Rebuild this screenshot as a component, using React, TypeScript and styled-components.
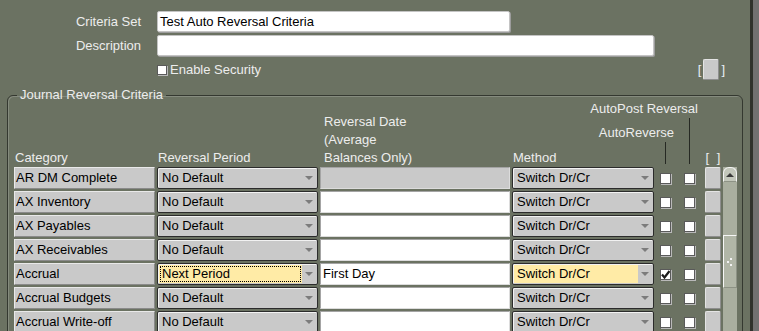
import React from 'react';
import styled, { createGlobalStyle } from 'styled-components';

const GlobalStyle = createGlobalStyle`
  html, body { margin: 0; padding: 0; }
  body {
    background: #6b7262;
    font-family: "Liberation Sans", Arial, sans-serif;
    font-size: 13px;
    color: #000;
  }
`;

const Page = styled.div`
  display: flex;
  height: 331px;
  overflow: hidden;
`;

const Main = styled.div`
  flex: 1;
  display: flex;
  flex-direction: column;
  min-width: 0;
`;

const WindowEdge = styled.div`
  width: 9px;
  border-left: 3px solid #2f322c;
  background: #717171;
  box-sizing: border-box;
`;

const TopForm = styled.div`
  display: grid;
  grid-template-columns: 141px 568px;
  column-gap: 16px;
  row-gap: 3px;
  padding-top: 11px;
  align-items: center;
`;

const Label = styled.div`
  text-align: right;
  color: #ededed;
  white-space: nowrap;
`;

const TextInput = styled.div<{ $width: number }>`
  width: ${p => p.$width}px;
  height: 21px;
  box-sizing: border-box;
  background: #fff;
  border: 1px solid #c4c4c4;
  border-radius: 2px;
  box-shadow: 1px 1px 0 #9c9c9c;
  padding: 0 2px;
  line-height: 19px;
  white-space: nowrap;
`;

const SecurityRow = styled.div`
  grid-column: 2;
  display: flex;
  justify-content: space-between;
  align-items: center;
  height: 21px;
`;

const CheckLabel = styled.label`
  display: flex;
  align-items: center;
  gap: 3px;
  color: #ededed;
`;

const Box = styled.span<{ $size?: number }>`
  display: inline-flex;
  align-items: center;
  justify-content: center;
  width: ${p => p.$size ?? 11}px;
  height: ${p => p.$size ?? 11}px;
  box-sizing: border-box;
  background: #fff;
  border: 1px solid #5a5a5a;
  box-shadow: 1px 1px 0 #b9b9b9;
`;

const Brackets = styled.div`
  display: flex;
  align-items: center;
  gap: 2px;
  color: #e6eef6;
`;

const RecordButton = styled.div<{ $h?: number }>`
  width: 16px;
  height: ${p => p.$h ?? 22}px;
  box-sizing: border-box;
  background: #c9c9c9;
  border: 1px solid;
  border-color: #e4e4e4 #8e8e8e #8e8e8e #e4e4e4;
  border-radius: 2px;
`;

const Group = styled.fieldset`
  margin: 8px 7px 0 7px;
  padding: 0 4px 0 6px;
  border: 1px solid #343830;
  border-radius: 6px;
  box-shadow: inset 1px 1px 0 rgba(255, 255, 255, 0.18);
  flex: 1;
  min-width: 0;
`;

const Legend = styled.legend`
  color: #ededed;
  padding: 0 3px;
  margin-left: 3px;
  line-height: 14px;
`;

const cols = '141px 161px 190px 142px 20px 25px 16px';

const HeaderGrid = styled.div`
  display: grid;
  grid-template-columns: ${cols};
  column-gap: 2px;
  height: 65px;
`;

const Head = styled.div<{ $center?: boolean }>`
  color: #ededed;
  line-height: 18px;
  align-self: end;
  white-space: nowrap;
  padding-left: ${p => (p.$center ? 0 : 1)}px;
  text-align: ${p => (p.$center ? 'center' : 'left')};
  word-spacing: ${p => (p.$center ? '4px' : 'normal')};
`;

const HeadWrap = styled(Head)`
  white-space: normal;
  padding-left: 4px;
`;

const LeaderHead = styled.div<{ $lineX: number; $lineH: number; $shift: number }>`
  align-self: end;
  display: flex;
  flex-direction: column;
  align-items: flex-end;
  color: #ededed;
  white-space: nowrap;
  padding-bottom: 3px;

  & > span {
    line-height: 14px;
    margin-right: ${p => p.$shift}px;
  }
  & > i {
    align-self: flex-start;
    margin-left: ${p => p.$lineX}px;
    margin-top: 2px;
    width: 1px;
    height: ${p => p.$lineH}px;
    background: #262923;
  }
`;

const Body = styled.div`
  display: flex;
  gap: 2px;
  align-items: flex-start;
`;

const Rows = styled.div`
  display: grid;
  grid-template-columns: ${cols};
  column-gap: 2px;
  row-gap: 2px;
`;

const CatCell = styled.div`
  height: 22px;
  box-sizing: border-box;
  background: #c9c9c9;
  border: 1px solid;
  border-color: #e9e9e9 #8a8a8a #8a8a8a #e9e9e9;
  padding-left: 1px;
  line-height: 20px;
  white-space: nowrap;
  overflow: hidden;
`;

const Select = styled.div`
  height: 22px;
  box-sizing: border-box;
  display: flex;
  background: #c9c9c9;
  border: 1px solid #2b2b2b;
  border-radius: 2px;
  box-shadow: inset 1px 1px 0 #f2f2f2;
`;

const SelectValue = styled.div<{ $active?: boolean; $focus?: boolean }>`
  flex: 1;
  padding-left: 3px;
  white-space: nowrap;
  background: ${p => (p.$active ? '#ffeba6' : 'transparent')};
  outline: ${p => (p.$focus ? '1px dotted #000' : 'none')};
  outline-offset: -2px;
  margin: 1px 0 1px 1px;
  line-height: 18px;
`;

const Arrow = styled.div`
  width: 15px;
  display: flex;
  align-items: center;
  justify-content: center;
  &::after {
    content: '';
    border-left: 4px solid transparent;
    border-right: 4px solid transparent;
    border-top: 4px solid #7c7c7c;
    margin-right: 1px;
  }
`;

const DateCell = styled.div<{ $disabled?: boolean }>`
  height: 22px;
  box-sizing: border-box;
  background: ${p => (p.$disabled ? '#c9c9c9' : '#fff')};
  border: 1px solid;
  border-color: #a4a4a4 #dcdcdc #dcdcdc #a4a4a4;
  padding-left: 2px;
  line-height: 20px;
  white-space: nowrap;
`;

const CheckCell = styled.div<{ $offset: number }>`
  display: flex;
  align-items: center;
  padding-left: ${p => p.$offset}px;
`;

const ScrollBar = styled.div`
  width: 14px;
  height: 170px;
  background: #a9ae9f;
  display: flex;
  flex-direction: column;
`;

const ScrollUp = styled.div`
  height: 15px;
  box-sizing: border-box;
  background: #c3c7bb;
  border: 1px solid #f4f4f4;
  border-bottom-color: #8d9285;
  border-radius: 6px 6px 0 0;
  display: flex;
  align-items: center;
  justify-content: center;
  &::after {
    content: '';
    border-left: 4px solid transparent;
    border-right: 4px solid transparent;
    border-bottom: 4px solid #3a3a3a;
  }
`;

const Thumb = styled.div`
  margin-top: 53px;
  height: 53px;
  box-sizing: border-box;
  background: #b1b6a7;
  border: 1px solid #f6f6f6;
  border-right-color: #8d9285;
  border-bottom-color: #8d9285;
  display: flex;
  align-items: center;
  justify-content: center;
`;

const Check = () => (
  <svg width="9" height="9" viewBox="0 0 9 9">
    <path d="M1 4.5 L3.5 7.5 L8.5 1" fill="none" stroke="#1a1a1a" strokeWidth="2.2" />
  </svg>
);

const Grip = () => (
  <svg width="8" height="10" viewBox="0 0 8 10">
    <rect x="4" y="1" width="2" height="2" fill="#f2f2f2" />
    <rect x="1" y="4" width="2" height="2" fill="#f2f2f2" />
    <rect x="4" y="7" width="2" height="2" fill="#f2f2f2" />
  </svg>
);

type Row = {
  category: string;
  period: string;
  date: string;
  method: string;
  auto?: boolean;
  active?: boolean;
  dateDisabled?: boolean;
};

const rows: Row[] = [
  { category: 'AR DM Complete', period: 'No Default', date: '', method: 'Switch Dr/Cr', dateDisabled: true },
  { category: 'AX Inventory', period: 'No Default', date: '', method: 'Switch Dr/Cr' },
  { category: 'AX Payables', period: 'No Default', date: '', method: 'Switch Dr/Cr' },
  { category: 'AX Receivables', period: 'No Default', date: '', method: 'Switch Dr/Cr' },
  { category: 'Accrual', period: 'Next Period', date: 'First Day', method: 'Switch Dr/Cr', auto: true, active: true },
  { category: 'Accrual Budgets', period: 'No Default', date: '', method: 'Switch Dr/Cr' },
  { category: 'Accrual Write-off', period: 'No Default', date: '', method: 'Switch Dr/Cr' },
];

export default function App() {
  return (
    <Page>
      <GlobalStyle />
      <Main>
        <TopForm>
          <Label>Criteria Set</Label>
          <TextInput $width={353}>Test Auto Reversal Criteria</TextInput>
          <Label>Description</Label>
          <TextInput $width={497} />
          <SecurityRow>
            <CheckLabel>
              <Box $size={10} />
              Enable Security
            </CheckLabel>
            <Brackets>
              [<RecordButton $h={21} />]
            </Brackets>
          </SecurityRow>
        </TopForm>

        <Group>
          <Legend>Journal Reversal Criteria</Legend>
          <HeaderGrid>
            <Head>Category</Head>
            <Head>Reversal Period</Head>
            <HeadWrap>Reversal Date<br />(Average<br />Balances Only)</HeadWrap>
            <Head>Method</Head>
            <LeaderHead $lineX={9} $lineH={22} $shift={2}>
              <span>AutoReverse</span>
              <i />
            </LeaderHead>
            <LeaderHead $lineX={11} $lineH={46} $shift={5}>
              <span>AutoPost Reversal</span>
              <i />
            </LeaderHead>
            <Head $center>[ ]</Head>
          </HeaderGrid>
          <Body>
            <Rows>
              {rows.map(r => (
                <React.Fragment key={r.category}>
                  <CatCell>{r.category}</CatCell>
                  <Select>
                    <SelectValue $active={r.active} $focus={r.active}>{r.period}</SelectValue>
                    <Arrow />
                  </Select>
                  <DateCell $disabled={r.dateDisabled}>{r.date}</DateCell>
                  <Select>
                    <SelectValue $active={r.active}>{r.method}</SelectValue>
                    <Arrow />
                  </Select>
                  <CheckCell $offset={4}>
                    <Box>{r.auto && <Check />}</Box>
                  </CheckCell>
                  <CheckCell $offset={6}>
                    <Box />
                  </CheckCell>
                  <RecordButton />
                </React.Fragment>
              ))}
            </Rows>
            <ScrollBar>
              <ScrollUp />
              <Thumb>
                <Grip />
              </Thumb>
            </ScrollBar>
          </Body>
        </Group>
      </Main>
      <WindowEdge />
    </Page>
  );
}
